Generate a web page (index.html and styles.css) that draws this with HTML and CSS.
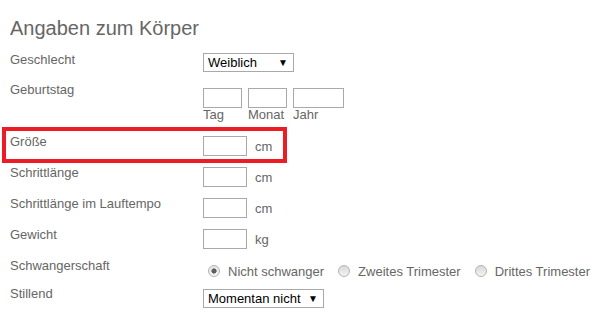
FILE: index.html
```html
<!DOCTYPE html>
<html lang="de">
<head>
<meta charset="utf-8">
<title>Angaben zum Körper</title>
<link rel="stylesheet" href="styles.css">
</head>
<body>
<div class="page">
  <h1 class="title">Angaben zum Körper</h1>

  <div class="row">
    <div class="lbl">Geschlecht</div>
    <div class="ctl ctl-select">
      <div class="select sel-sex"><span>Weiblich</span><span class="caret">▼</span></div>
    </div>
  </div>

  <div class="row row-date">
    <div class="lbl">Geburtstag</div>
    <div class="ctl date">
      <div class="part"><input class="box w-day" type="text"><span>Tag</span></div>
      <div class="part"><input class="box w-mon" type="text"><span>Monat</span></div>
      <div class="part"><input class="box w-yr" type="text"><span>Jahr</span></div>
    </div>
  </div>

  <div class="row row-input hl">
    <div class="lbl">Größe</div>
    <div class="ctl unit"><input class="box w-num" type="text"><span>cm</span></div>
  </div>

  <div class="row row-input">
    <div class="lbl">Schrittlänge</div>
    <div class="ctl unit"><input class="box w-num" type="text"><span>cm</span></div>
  </div>

  <div class="row row-input">
    <div class="lbl">Schrittlänge im Lauftempo</div>
    <div class="ctl unit"><input class="box w-num" type="text"><span>cm</span></div>
  </div>

  <div class="row row-input">
    <div class="lbl">Gewicht</div>
    <div class="ctl unit"><input class="box w-num" type="text"><span>kg</span></div>
  </div>

  <div class="row row-radio">
    <div class="lbl">Schwangerschaft</div>
    <div class="ctl radios">
      <label class="radio"><input type="radio" name="preg" checked><span>Nicht schwanger</span></label>
      <label class="radio"><input type="radio" name="preg"><span>Zweites Trimester</span></label>
      <label class="radio"><input type="radio" name="preg"><span>Drittes Trimester</span></label>
    </div>
  </div>

  <div class="row">
    <div class="lbl">Stillend</div>
    <div class="ctl ctl-select2">
      <div class="select sel-nurse"><span>Momentan nicht</span><span class="caret">▼</span></div>
    </div>
  </div>
</div>
</body>
</html>
```

FILE: styles.css
```css
*, *::before, *::after { box-sizing: border-box; }

body {
  margin: 0;
  background: #fff;
  font: 13px/15px "Liberation Sans", Arial, sans-serif;
  color: #666;
}

.page {
  padding: 17px 10px 0;
}

.title {
  margin: 0 0 12px;
  font-size: 20px;
  line-height: 23px;
  font-weight: normal;
  color: #666;
}

.row {
  position: relative;
  display: grid;
  grid-template-columns: 193px 1fr;
  align-items: start;
  min-height: 21px;
  margin-bottom: 9px;
}

.lbl { line-height: 15px; }

.ctl-select { padding-top: 1px; }
.ctl-select2 { padding-top: 3px; }

.select {
  display: flex;
  align-items: center;
  justify-content: space-between;
  height: 19px;
  padding: 0 5px 0 4px;
  border: 1px solid #a9a9a9;
  background: #fff;
  color: #000;
}
.sel-sex { width: 91px; }
.sel-nurse { width: 121px; }
.caret {
  font-size: 10px;
  line-height: 10px;
  color: #000;
}

.box {
  height: 20px;
  margin: 0;
  padding: 0 2px;
  border: 1px solid #a9a9a9;
  background: #fff;
  font: inherit;
  outline: none;
}
.w-day { width: 39px; }
.w-mon { width: 39px; }
.w-yr { width: 51px; }
.w-num { width: 44px; }

.row-date { margin-bottom: 12px; }
.date {
  display: flex;
  gap: 6px;
  padding-top: 6px;
}
.part {
  display: flex;
  flex-direction: column;
}
.part span { line-height: 14px; }

.unit {
  display: flex;
  align-items: center;
  gap: 8px;
  padding-top: 2px;
}

.hl::before {
  content: "";
  position: absolute;
  left: -8px;
  top: -7px;
  width: 285px;
  height: 36px;
  border: 4px solid #ed1c24;
  pointer-events: none;
}

.row-radio { margin-bottom: 7px; }
.radios {
  display: flex;
  align-items: flex-start;
  padding-top: 6px;
  white-space: nowrap;
}
.radio {
  display: flex;
  align-items: flex-start;
  gap: 8px;
  margin-right: 14px;
}
.radio:first-child { margin-left: 5px; }
.radio:last-child { margin-right: 0; }
.radio input {
  appearance: none;
  -webkit-appearance: none;
  flex: none;
  width: 12px;
  height: 12px;
  margin: 1px 0 0;
  border: 1px solid #b4b4b4;
  border-radius: 50%;
  background: linear-gradient(#d9d9d9, #f3f3f3);
}
.radio input:checked {
  background:
    radial-gradient(circle, #5f5f5f 0 2.3px, transparent 2.9px),
    linear-gradient(#e2e2e2, #f6f6f6);
}
```
